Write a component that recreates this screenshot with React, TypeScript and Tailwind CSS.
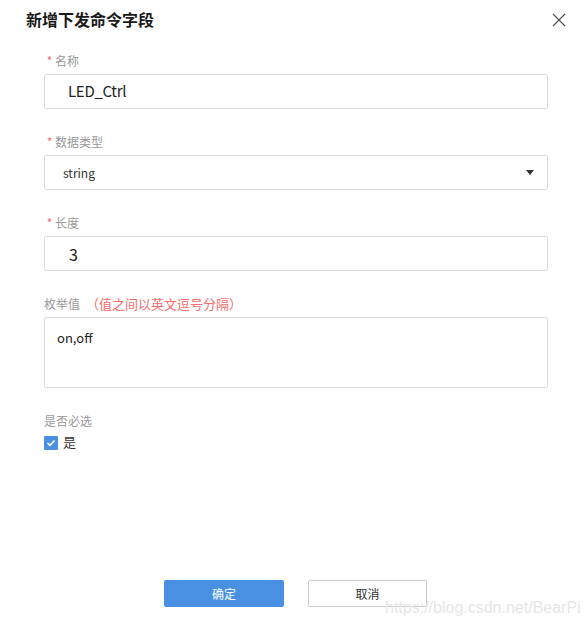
import React from "react";

function Label({ text, required }: { text: string; required?: boolean }) {
  return (
    <div className="flex items-center h-[16px] mb-[5px] text-[12px] leading-[16px] text-[#999999]">
      {required && <span className="inline-block w-[11px] text-center text-[#f56c6c]">*</span>}
      <span>{text}</span>
    </div>
  );
}

export default function App() {
  return (
    <div
      className="relative w-[586px] h-[627px] bg-white overflow-hidden"
      style={{ fontFamily: '"Microsoft YaHei", "Noto Sans CJK SC", sans-serif' }}
    >
      <div className="flex items-center justify-between pl-[26px] pr-[20px] pt-[7px] h-[31px]">
        <div className="text-[16px] leading-[24px] font-bold text-[#1a1a1a]">新增下发命令字段</div>
        <svg width="14" height="14" viewBox="0 0 14 14" className="mt-[1px]">
          <path d="M1 1 L13 13 M13 1 L1 13" stroke="#555555" strokeWidth="1.3" fill="none" />
        </svg>
      </div>

      <div className="pl-[44px] pr-[38px] pt-[22px]">
        {/* 名称 */}
        <Label text="名称" required />
        <div className="h-[35px] border border-[#dcdcdc] rounded-[2px] flex items-center pl-[23px] text-[15px] tracking-[-0.3px] text-[#222222]">
          LED_Ctrl
        </div>

        {/* 数据类型 */}
        <div className="mt-[25px]">
          <Label text="数据类型" required />
          <div className="h-[35px] border border-[#dcdcdc] rounded-[2px] flex items-center justify-between pl-[18px] pr-[13px] text-[12px] text-[#333333]">
            <span>string</span>
            <svg width="8" height="5" viewBox="0 0 8 5">
              <path d="M0 0 L8 0 L4 5 Z" fill="#333333" />
            </svg>
          </div>
        </div>

        {/* 长度 */}
        <div className="mt-[25px]">
          <Label text="长度" required />
          <div className="h-[35px] border border-[#dcdcdc] rounded-[2px] flex items-center pl-[24px] text-[16px] text-[#222222]">
            3
          </div>
        </div>

        {/* 枚举值 */}
        <div className="mt-[25px]">
          <div className="flex items-center h-[16px] mb-[5px] text-[12px] leading-[16px] text-[#999999]">
            <span>枚举值</span>
            <span className="ml-[6px] text-[13px] text-[#f56c6c]">（值之间以英文逗号分隔）</span>
          </div>
          <div className="h-[71px] border border-[#dcdcdc] rounded-[2px] pl-[12px] pt-[10px] text-[13px] leading-[20px] text-[#222222]">
            on,off
          </div>
        </div>

        {/* 是否必选 */}
        <div className="mt-[25px]">
          <Label text="是否必选" />
          <div className="flex items-center h-[16px]">
            <span className="w-[14px] h-[14px] bg-[#4a90e2] rounded-[1px] flex items-center justify-center mt-[1px]">
              <svg width="10" height="8" viewBox="0 0 10 8">
                <path d="M1.5 4 L4 6.3 L8.5 1.5" stroke="white" strokeWidth="1.6" fill="none" />
              </svg>
            </span>
            <span className="ml-[5px] text-[13px] text-[#333333]">是</span>
          </div>
        </div>
      </div>

      <div className="absolute left-0 right-0 top-[580px] flex pl-[164px] gap-[24px]">
        <button className="w-[120px] h-[27px] bg-[#4a90e2] rounded-[2px] text-white text-[12px]">确定</button>
        <button className="w-[119px] h-[27px] bg-white border border-[#cccccc] rounded-[2px] text-[#333333] text-[12px]">取消</button>
      </div>

      <div
        className="absolute left-[385px] top-[598px] text-[16px] leading-[20px] text-[#e6e6e6]"
        style={{ fontFamily: '"Liberation Sans", Arial, sans-serif' }}
      >
        https://blog.csdn.net/BearPi
      </div>
    </div>
  );
}
